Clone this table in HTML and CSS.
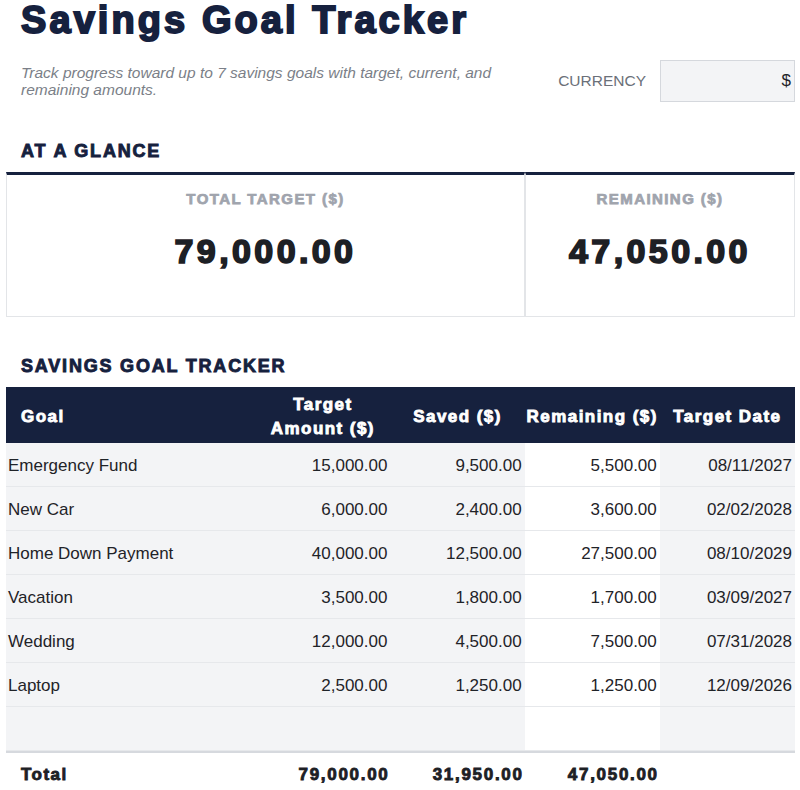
FILE: index.html
```html
<!DOCTYPE html>
<html lang="en">
<head>
<meta charset="utf-8">
<title>Savings Goal Tracker</title>
<link rel="stylesheet" href="styles.css">
</head>
<body>
<div class="page">
  <h1 class="title heavy">Savings Goal Tracker</h1>
  <div class="intro">
    <p class="subtitle">Track progress toward up to 7 savings goals with target, current, and remaining amounts.</p>
    <div class="currency">
      <span class="currency-label">CURRENCY</span>
      <div class="currency-box">$</div>
    </div>
  </div>

  <h2 class="section heavy">AT A GLANCE</h2>
  <div class="cards">
    <div class="card">
      <div class="card-label heavy">TOTAL TARGET ($)</div>
      <div class="card-value heavy">79,000.00</div>
    </div>
    <div class="card">
      <div class="card-label heavy">REMAINING ($)</div>
      <div class="card-value heavy">47,050.00</div>
    </div>
  </div>

  <h2 class="section heavy">SAVINGS GOAL TRACKER</h2>
  <table class="tracker">
    <colgroup>
      <col class="c-goal">
      <col class="c-num">
      <col class="c-num2">
      <col class="c-num">
      <col class="c-num">
    </colgroup>
    <thead>
      <tr>
        <th class="goal heavy">Goal</th>
        <th class="heavy">Target<br>Amount ($)</th>
        <th class="heavy">Saved ($)</th>
        <th class="heavy">Remaining ($)</th>
        <th class="heavy">Target Date</th>
      </tr>
    </thead>
    <tbody>
      <tr><td class="goal">Emergency Fund</td><td>15,000.00</td><td>9,500.00</td><td class="calc">5,500.00</td><td>08/11/2027</td></tr>
      <tr><td class="goal">New Car</td><td>6,000.00</td><td>2,400.00</td><td class="calc">3,600.00</td><td>02/02/2028</td></tr>
      <tr><td class="goal">Home Down Payment</td><td>40,000.00</td><td>12,500.00</td><td class="calc">27,500.00</td><td>08/10/2029</td></tr>
      <tr><td class="goal">Vacation</td><td>3,500.00</td><td>1,800.00</td><td class="calc">1,700.00</td><td>03/09/2027</td></tr>
      <tr><td class="goal">Wedding</td><td>12,000.00</td><td>4,500.00</td><td class="calc">7,500.00</td><td>07/31/2028</td></tr>
      <tr><td class="goal">Laptop</td><td>2,500.00</td><td>1,250.00</td><td class="calc">1,250.00</td><td>12/09/2026</td></tr>
      <tr><td class="goal"></td><td></td><td></td><td class="calc"></td><td></td></tr>
    </tbody>
    <tfoot>
      <tr>
        <td class="goal heavy">Total</td>
        <td class="heavy num">79,000.00</td>
        <td class="heavy num">31,950.00</td>
        <td class="heavy num">47,050.00</td>
        <td></td>
      </tr>
    </tfoot>
  </table>
</div>
</body>
</html>
```
FILE: styles.css
```css
* {
  box-sizing: border-box;
}

body {
  margin: 0;
  background: #ffffff;
  color: #1f2328;
  font-family: "Liberation Sans", Arial, sans-serif;
}

.page {
  padding: 0 5px 0 6px;
}

.heavy {
  font-weight: 700;
  letter-spacing: 0.085em;
  -webkit-text-stroke: 0.05em currentColor;
}

.title {
  margin: 0;
  padding-left: 15px;
  font-size: 38px;
  line-height: 40px;
  color: #16213e;
  letter-spacing: 0.081em;
}

.intro {
  display: flex;
  align-items: center;
  gap: 24px;
  margin-top: 20px;
  padding-left: 15px;
}

.subtitle {
  flex: 1;
  margin: 0;
  font-size: 15.5px;
  line-height: 17px;
  font-style: italic;
  color: #7b7f88;
}

.currency {
  display: flex;
  align-items: center;
  gap: 14px;
}

.currency-label {
  font-size: 15.5px;
  color: #6b7079;
}

.currency-box {
  width: 135px;
  height: 42px;
  display: flex;
  align-items: center;
  justify-content: flex-end;
  padding-right: 3px;
  background: #f3f4f6;
  border: 1px solid #d5d8dd;
  font-size: 17px;
  color: #1f2328;
}

.section {
  margin: 38px 0 10px;
  padding-left: 15px;
  font-size: 18px;
  line-height: 22px;
  color: #16213e;
  letter-spacing: 0.1em;
}

.cards {
  display: grid;
  grid-template-columns: 519fr 270fr;
}

.card {
  border: 1px solid #e3e5e8;
  border-top: 3px solid #16213e;
  padding: 15px 0 45px;
  text-align: center;
}

.card-label {
  font-size: 15px;
  line-height: 18px;
  color: #a0a4ad;
  letter-spacing: 0.095em;
}

.card-value {
  margin-top: 23px;
  font-size: 34px;
  line-height: 40px;
  color: #1d2025;
  letter-spacing: 0.1em;
}

.tracker {
  width: 100%;
  margin-top: 1px;
  border-collapse: separate;
  border-spacing: 0;
  table-layout: fixed;
  font-size: 17px;
}

.c-goal { width: 249px; }
.c-num { width: 135px; }
.c-num2 { width: 134px; }

.tracker th {
  height: 56px;
  padding: 4px 1px 0;
  background: #16213e;
  color: #ffffff;
  font-size: 17px;
  line-height: 24px;
  text-align: center;
  white-space: nowrap;
  vertical-align: middle;
}

.tracker th.goal {
  text-align: left;
  padding-left: 15px;
}

.tracker td {
  height: 44px;
  padding: 2px 3px 0 2px;
  background: #f3f4f6;
  border-bottom: 1px solid #e6e8eb;
  text-align: right;
  vertical-align: middle;
  white-space: nowrap;
}

.tracker td.goal {
  text-align: left;
}

.tracker td.calc {
  background: #ffffff;
}

.tracker tfoot td {
  background: #ffffff;
  border-bottom: none;
  border-top: 2px solid #d6d9de;
  color: #1d2025;
}

.tracker tfoot td.goal {
  padding-left: 15px;
}

.tracker tfoot td.num {
  letter-spacing: 0.1em;
  padding-right: 1px;
}
```
